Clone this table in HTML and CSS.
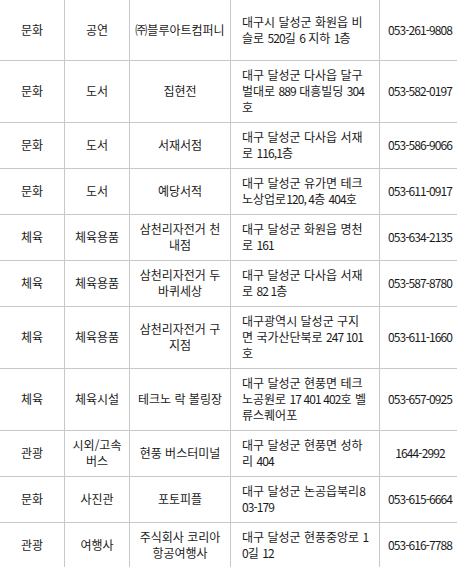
FILE: index.html
```html
<!DOCTYPE html>
<html lang="ko">
<head>
<meta charset="utf-8">
<title>달성군 업체 목록</title>
<link rel="stylesheet" href="styles.css">
</head>
<body>
<table class="list">
  <colgroup>
    <col class="c-cat">
    <col class="c-type">
    <col class="c-name">
    <col class="c-addr">
    <col class="c-tel">
  </colgroup>
  <tbody>
    <tr class="first"><td>문화</td><td>공연</td><td class="name">㈜블루아트컴퍼니</td><td class="addr">대구시 달성군 화원읍 비슬로 <span class="num">520</span>길 <span class="num">6</span> 지하 <span class="num">1</span>층</td><td class="tel">053-261-9808</td></tr>
    <tr><td>문화</td><td>도서</td><td class="name">집현전</td><td class="addr">대구 달성군 다사읍 달구벌대로 <span class="num">889</span> 대흥빌딩 <span class="num">304</span>호</td><td class="tel">053-582-0197</td></tr>
    <tr><td>문화</td><td>도서</td><td class="name">서재서점</td><td class="addr">대구 달성군 다사읍 서재로 <span class="num">116,1</span>층</td><td class="tel">053-586-9066</td></tr>
    <tr><td>문화</td><td>도서</td><td class="name">예당서적</td><td class="addr">대구 달성군 유가면 테크노상업로<span class="num">120, 4</span>층 <span class="num">404</span>호</td><td class="tel">053-611-0917</td></tr>
    <tr><td>체육</td><td>체육용품</td><td class="name">삼천리자전거 천내점</td><td class="addr">대구 달성군 화원읍 명천로 <span class="num">161</span></td><td class="tel">053-634-2135</td></tr>
    <tr><td>체육</td><td>체육용품</td><td class="name">삼천리자전거 두바퀴세상</td><td class="addr">대구 달성군 다사읍 서재로 <span class="num">82 1</span>층</td><td class="tel">053-587-8780</td></tr>
    <tr><td>체육</td><td>체육용품</td><td class="name">삼천리자전거 구지점</td><td class="addr">대구광역시 달성군 구지면 국가산단북로 <span class="num">247 101</span>호</td><td class="tel">053-611-1660</td></tr>
    <tr><td>체육</td><td>체육시설</td><td class="name">테크노 락 볼링장</td><td class="addr">대구 달성군 현풍면 테크노공원로 <span class="num">17 401 402</span>호 벨류스퀘어포</td><td class="tel">053-657-0925</td></tr>
    <tr><td>관광</td><td>시외/고속버스</td><td class="name">현풍 버스터미널</td><td class="addr">대구 달성군 현풍면 성하리 <span class="num">404</span></td><td class="tel">1644-2992</td></tr>
    <tr><td>문화</td><td>사진관</td><td class="name">포토피플</td><td class="addr">대구 달성군 논공읍북리<span class="num">803-179</span></td><td class="tel">053-615-6664</td></tr>
    <tr><td>관광</td><td>여행사</td><td class="name">주식회사 코리아항공여행사</td><td class="addr">대구 달성군 현풍중앙로 <span class="num">10</span>길 <span class="num">12</span></td><td class="tel">053-616-7788</td></tr>
  </tbody>
</table>
</body>
</html>
```
FILE: styles.css
```css
html, body {
  margin: 0;
  padding: 0;
  overflow: hidden;
  background: #fff;
}

.list {
  margin: -1px 0 0 -1px;
  width: 461px;
  table-layout: fixed;
  border-collapse: collapse;
  font-family: "Noto Sans CJK KR", "Noto Sans", sans-serif;
  font-size: 12px;
  line-height: 16px;
  color: #1a1a1a;
}

.c-cat { width: 65px; }
.c-type { width: 65px; }
.c-name { width: 101px; }
.c-addr { width: 149px; }
.c-tel { width: 81px; }

.list td {
  border: 1px solid #c8c8c8;
  padding: 6px 6px 7px;
  text-align: center;
  vertical-align: middle;
}

.list td.name {
  padding-left: 5px;
  padding-right: 5px;
}

.list td.addr {
  text-align: left;
  word-break: break-all;
  padding-left: 11px;
  padding-right: 10px;
}

.num {
  letter-spacing: -0.9px;
}

.list td.tel {
  white-space: nowrap;
  letter-spacing: -0.9px;
  padding-left: 2px;
  padding-right: 2px;
}

.list tr.first td {
  height: 47px;
}
```
